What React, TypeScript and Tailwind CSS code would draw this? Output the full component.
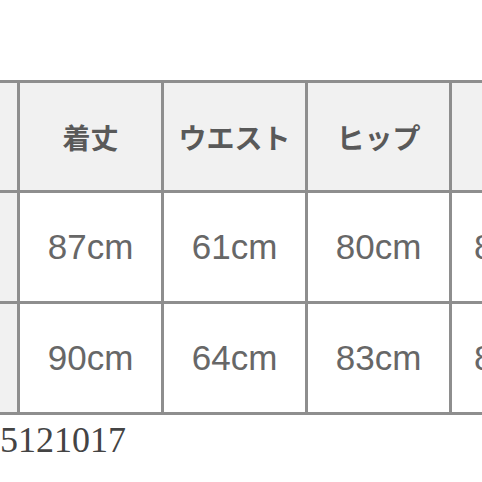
const headers = ["サイズ", "着丈", "ウエスト", "ヒップ", "股下"];

const rows = [
  ["S", "87cm", "61cm", "80cm", "85cm"],
  ["M", "90cm", "64cm", "83cm", "86cm"],
];

export default function App() {
  return (
    <div
      className="w-[482px] h-[482px] overflow-hidden bg-white"
      style={{ fontFamily: '"Noto Sans CJK JP", "Noto Sans", sans-serif' }}
    >
      <div className="pt-[80px] ml-[-127px]">
        {/* size table — wider than the view, clipped on both sides */}
        <div className="w-max border-t-[3px] border-l-[3px] border-[#8e8e8e]">
          <div className="flex">
            {headers.map((h) => (
              <div
                key={h}
                className="w-[144px] h-[110px] shrink-0 flex items-center justify-center border-r-[3px] border-b-[3px] border-[#8e8e8e] bg-[#f1f1f1] text-[28px] font-bold text-[#595959]"
              >
                {h}
              </div>
            ))}
          </div>
          {rows.map((r) => (
            <div key={r[0]} className="flex">
              {r.map((c, i) => (
                <div
                  key={i}
                  className={`w-[144px] h-[111px] shrink-0 flex items-center border-r-[3px] border-b-[3px] border-[#8e8e8e] text-[35px] text-[#676767] ${
                    i === 0 ? "bg-[#f1f1f1]" : "bg-white"
                  } ${i === 4 ? "justify-start pl-[22px]" : "justify-center"}`}
                  style={{ fontFamily: '"Liberation Sans", Arial, sans-serif' }}
                >
                  {c}
                </div>
              ))}
            </div>
          ))}
        </div>
      </div>

      <p
        className="mt-[7px] ml-[-18px] text-[36px] leading-none text-[#444]"
        style={{ fontFamily: '"Liberation Serif", serif' }}
      >
        35121017
      </p>
    </div>
  );
}
